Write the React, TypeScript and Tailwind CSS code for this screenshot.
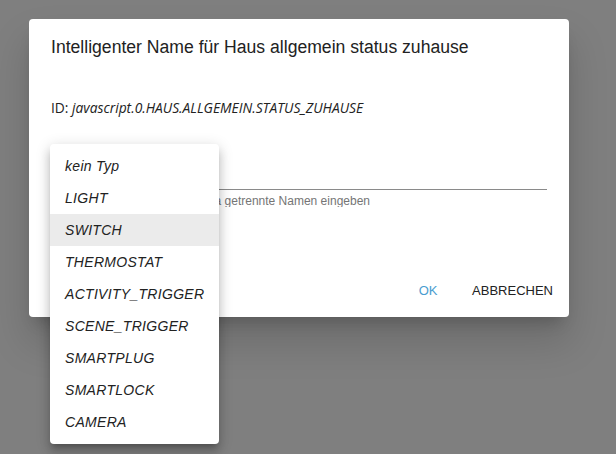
import React from 'react';

const types = [
  'kein Typ',
  'LIGHT',
  'SWITCH',
  'THERMOSTAT',
  'ACTIVITY_TRIGGER',
  'SCENE_TRIGGER',
  'SMARTPLUG',
  'SMARTLOCK',
  'CAMERA',
];

const App: React.FC = () => {
  return (
    <div className="relative h-[454px] w-[616px] overflow-hidden bg-[#7f7f7f] pl-[29px] pt-[19px] font-['Roboto',sans-serif]">
      <div className="flex h-[298px] w-[540px] flex-col rounded bg-white shadow-[0_11px_15px_-7px_rgba(0,0,0,0.2),0_24px_38px_3px_rgba(0,0,0,0.14)]">
        <h2 className="px-[22px] pt-[16px] font-['Liberation_Sans',sans-serif] text-[17.6px] leading-[24px] text-[#222]">
          Intelligenter Name für Haus allgemein status zuhause
        </h2>

        <p className="mt-[39px] px-[22px] font-['Open_Sans',sans-serif] text-[13.8px] leading-[20px] text-[#222]">
          ID: <i>javascript.0.HAUS.ALLGEMEIN.STATUS_ZUHAUSE</i>
        </p>

        <div className="mx-[22px] mt-[71px] h-px w-[496px] bg-[#8a8a8a]" />
        {/* helper line: right end fixed, the start lies under the open menu */}
        <div className="mx-[22px] mt-[5px] flex w-[319px] justify-end overflow-hidden whitespace-nowrap font-['Liberation_Sans',sans-serif] text-[12px] leading-[12px] text-[#757575]">
          <span>Sie können mehrere durch Komma getrennte Namen eingeben</span>
        </div>

        <div className="mt-auto flex justify-end gap-[4px] px-[8px] pb-[8px]">
          <button className="min-w-[64px] rounded px-[8px] py-[6px] font-['Liberation_Sans',sans-serif] text-[13px] uppercase leading-[24px] text-[#4a9dd0]">
            OK
          </button>
          <button className="min-w-[64px] rounded px-[8px] py-[6px] font-['Liberation_Sans',sans-serif] text-[13px] uppercase leading-[24px] text-[#222]">
            Abbrechen
          </button>
        </div>
      </div>

      <ul className="absolute left-[50px] top-[144px] w-[169px] rounded bg-white py-[6px] shadow-[0_5px_5px_-3px_rgba(0,0,0,0.2),0_8px_10px_1px_rgba(0,0,0,0.14),0_3px_14px_2px_rgba(0,0,0,0.12)]">
        {types.map(t => (
          <li
            key={t}
            className={`flex h-[32px] items-center pl-[15px] font-['Liberation_Sans',sans-serif] text-[14px] italic tracking-[0.3px] text-[#222] ${
              t === 'SWITCH' ? 'bg-[#ebebeb]' : ''
            }`}
          >
            {t}
          </li>
        ))}
      </ul>
    </div>
  );
};

export default App;
